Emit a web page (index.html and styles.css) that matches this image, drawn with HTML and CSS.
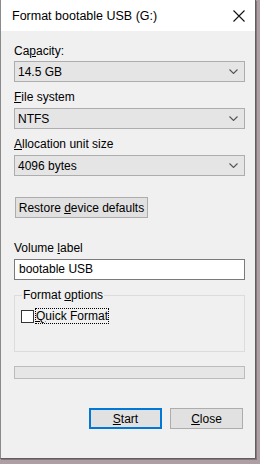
FILE: index.html
```html
<!DOCTYPE html>
<html lang="en">
<head>
  <meta charset="UTF-8">
  <title>Format bootable USB (G:)</title>
  <link rel="stylesheet" href="styles.css">
</head>
<body>

<div class="window">
  <div class="titlebar">
    <span class="title">Format bootable USB (G:)</span>
    <svg class="close-x" width="12" height="12" viewBox="0 0 12 12">
      <path d="M0.5 0.5 L11.5 11.5 M11.5 0.5 L0.5 11.5" stroke="#111" stroke-width="1.1" fill="none"/>
    </svg>
  </div>

  <div class="content">
    <div class="label label-first">Ca<u>p</u>acity:</div>
    <div class="combo">
      <span>14.5 GB</span>
      <svg class="chevron" width="9" height="5" viewBox="0 0 9 5">
        <path d="M0.5 0.5 L4.5 4.5 L8.5 0.5" stroke="#555" stroke-width="1.1" fill="none"/>
      </svg>
    </div>

    <div class="label"><u>F</u>ile system</div>
    <div class="combo">
      <span>NTFS</span>
      <svg class="chevron" width="9" height="5" viewBox="0 0 9 5">
        <path d="M0.5 0.5 L4.5 4.5 L8.5 0.5" stroke="#555" stroke-width="1.1" fill="none"/>
      </svg>
    </div>

    <div class="label"><u>A</u>llocation unit size</div>
    <div class="combo">
      <span>4096 bytes</span>
      <svg class="chevron" width="9" height="5" viewBox="0 0 9 5">
        <path d="M0.5 0.5 L4.5 4.5 L8.5 0.5" stroke="#555" stroke-width="1.1" fill="none"/>
      </svg>
    </div>

    <div class="btn restore"><span>Restore <u>d</u>evice defaults</span></div>

    <div class="label label-volume">Volume <u>l</u>abel</div>
    <div class="textbox">bootable USB</div>

    <div class="group">
      <div class="legend">Format <u>o</u>ptions</div>
      <div class="check-row">
        <span class="checkbox"></span>
        <span class="check-label"><u>Q</u>uick Format</span>
      </div>
    </div>

    <div class="progress"></div>

    <div class="actions">
      <div class="btn default"><span><u>S</u>tart</span></div>
      <div class="btn"><span><u>C</u>lose</span></div>
    </div>
  </div>
</div>

</body>
</html>
```

FILE: styles.css
```css
* {
  margin: 0;
  padding: 0;
  box-sizing: border-box;
}

body {
  width: 260px;
  height: 464px;
  background-color: #ad9fa3;
  font-family: "Segoe UI", "Liberation Sans", Arial, sans-serif;
  font-size: 12px;
  color: #000;
  overflow: hidden;
}

u {
  text-decoration: underline;
  text-underline-offset: 1px;
}

/* the dialog itself */
.window {
  width: 256px;
  height: 459px;
  background-color: #f0f0f0;
  border-left: 1px solid #8a8a8a;
  border-right: 1px solid #5f5f5f;
  border-bottom: 1px solid #5f5f5f;
  box-shadow: 1px 1px 0 rgba(60, 50, 55, 0.35);
  display: flex;
  flex-direction: column;
}

.titlebar {
  height: 31px;
  background-color: #fff;
  display: flex;
  align-items: center;
  justify-content: space-between;
  padding: 0 10px 0 11px;
}

.title {
  font-size: 12.5px;
  color: #000;
  padding-top: 1px;
}

.close-x {
  display: block;
  margin-top: 1px;
}

.content {
  padding: 0 10px 0 13px;
  display: flex;
  flex-direction: column;
}

.label {
  height: 15px;
  line-height: 15px;
  margin-top: 8px;
  margin-bottom: 3px;
}

.label-first {
  margin-top: 13px;
  margin-bottom: 2px;
}

.label-volume {
  margin-top: 23px;
}

/* dropdowns */
.combo {
  width: 231px;
  height: 21px;
  background-color: #e5e5e5;
  border: 1px solid #adadad;
  display: flex;
  align-items: center;
  justify-content: space-between;
  padding: 0 6px 0 3px;
}

.chevron {
  display: block;
}

.btn {
  height: 21px;
  background-color: #e1e1e1;
  border: 1px solid #adadad;
  display: flex;
  align-items: center;
  justify-content: center;
}

.restore {
  width: 133px;
  margin-top: 21px;
  margin-left: 1px;
}

.textbox {
  width: 231px;
  height: 21px;
  background-color: #fff;
  border: 1px solid #7a7a7a;
  line-height: 19px;
  padding-left: 4px;
}

/* group box */
.group {
  position: relative;
  width: 231px;
  height: 57px;
  margin-top: 15px;
  border: 1px solid #dcdcdc;
  padding: 12px 0 0 6px;
}

.legend {
  position: absolute;
  top: -8px;
  left: 7px;
  padding: 0 1px;
  background-color: #f0f0f0;
  line-height: 15px;
}

.check-row {
  display: flex;
  align-items: center;
  gap: 1px;
}

.checkbox {
  width: 13px;
  height: 13px;
  border: 1px solid #333;
  background-color: #fff;
}

.check-label {
  outline: 1px dotted #000;
  outline-offset: -1px;
  padding: 0 1px;
  line-height: 16px;
}

.progress {
  width: 231px;
  height: 13px;
  margin-top: 14px;
  background-color: #e6e6e6;
  border: 1px solid #bcbcbc;
}

.actions {
  display: flex;
  justify-content: flex-end;
  gap: 8px;
  margin-top: 29px;
  padding-right: 2px;
}

.actions .btn {
  width: 73px;
}

.actions .default {
  border: 2px solid #0078d7;
}
```
